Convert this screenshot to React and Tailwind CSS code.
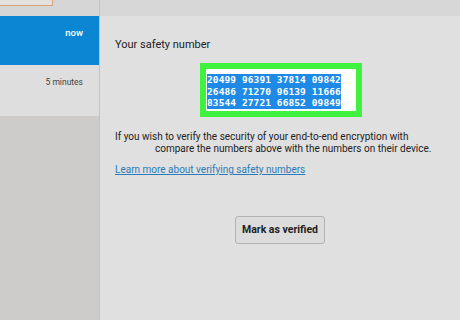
export default function App() {
  const lines = ["20499 96391 37814 09842", "26486 71270 96139 11666", "83544 27721 66852 09849"]

  return (
    <div className="w-[460px] h-[320px] flex overflow-hidden bg-[#e0e0e0] font-['Roboto',sans-serif]">
      {/* conversation list */}
      <div className="w-[100px] h-full flex flex-col bg-[#cdcccb] border-r border-[#c4c4c4]">
        <div className="h-[16px] bg-[#d6d6d6]">
          <div className="w-[53px] h-[6px] bg-[#e4e1dd] border-r border-b border-[#d2a77c]" />
        </div>
        <div className="h-[49px] bg-[#0a86d3] flex justify-end pr-[16px] pt-[12px]">
          <span className="text-[9.5px] text-white font-medium leading-none">now</span>
        </div>
        <div className="h-[51px] bg-[#dedede] flex justify-end pr-[16px] pt-[13px]">
          <span className="text-[8.5px] text-[#444] leading-none">5 minutes</span>
        </div>
      </div>

      {/* safety number panel */}
      <div className="flex-1 flex flex-col">
        <div className="h-[16px] bg-[#d7d7d7]" />
        <div className="flex-1 px-[15px] pt-[23px] text-[#222]">
          <p className="text-[11px] leading-none">Your safety number</p>
          <div className="ml-[85px] mt-[13px] w-[162px] border-[6px] border-[#3ff23f] bg-white pl-[1px] pt-[3px] pb-[4px]">
            {lines.map((l, i) => (
              <div key={i} className="h-[11.7px] leading-[11.7px]">
                <span className="inline-block h-[11.7px] leading-[11.7px] bg-[#1f8ae6] text-white font-['DejaVu_Sans_Mono',monospace] text-[9.5px] font-bold tracking-[0.1px]">
                  {l}
                </span>
              </div>
            ))}
          </div>
          <p className="mt-[14px] text-[10px] leading-[12px] text-[#222] whitespace-nowrap">
            If you wish to verify the security of your end-to-end encryption with
            <br />
            <span className="pl-[40px]">compare the numbers above with the numbers on their device.</span>
          </p>
          <a className="block mt-[10px] text-[10px] leading-none text-[#2b7bb9] underline" href="#">
            Learn more about verifying safety numbers
          </a>
          <div className="mt-[41px] flex justify-center">
            <button className="h-[28px] px-[6px] bg-[#dcdcdc] border border-[#b3b3b3] rounded-[3px] text-[10.5px] font-bold text-[#222]">
              Mark as verified
            </button>
          </div>
        </div>
      </div>
    </div>
  )
}
